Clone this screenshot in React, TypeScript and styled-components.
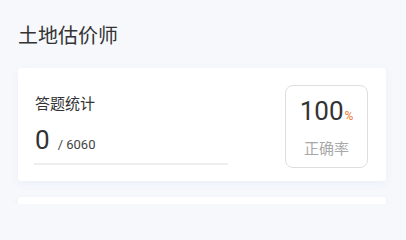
import React from "react";
import styled, { createGlobalStyle } from "styled-components";

const GlobalStyle = createGlobalStyle`
  html, body {
    margin: 0;
    padding: 0;
    background: #f6f8fc;
  }
  body {
    font-family: Roboto, "Noto Sans CJK SC", sans-serif;
    color: #333;
  }
`;

const Page = styled.div`
  display: flex;
  flex-direction: column;
  padding: 21px 20px 0 18px;
  height: 204px;
  box-sizing: border-box;
  overflow: hidden;
`;

const Title = styled.h1`
  margin: 0 0 19px 0;
  font-family: "Noto Sans CJK SC", sans-serif;
  font-size: 20px;
  line-height: 28px;
  font-weight: 400;
  color: #333;
`;

const Card = styled.div`
  display: flex;
  align-items: center;
  justify-content: space-between;
  background: #fff;
  border-radius: 3px;
  box-shadow: 0 3px 10px rgba(40, 80, 160, 0.05);
  padding: 17px 18px 13px 16px;
  margin-bottom: 16px;
  flex-shrink: 0;
`;

const EmptyCard = styled(Card)`
  height: 60px;
`;

const StatColumn = styled.div`
  display: flex;
  flex-direction: column;
  width: 194px;
  padding-top: 4px;
`;

const Label = styled.div`
  font-family: "Noto Sans CJK SC", sans-serif;
  font-size: 15px;
  line-height: 20px;
  color: #333;
  padding-left: 1px;
`;

const CountRow = styled.div`
  display: flex;
  align-items: baseline;
  margin-top: 12px;
  line-height: 30px;
`;

const BigNumber = styled.span`
  font-family: Roboto, sans-serif;
  font-size: 26px;
  color: #333;
  padding-left: 1px;
`;

const Total = styled.span`
  font-family: Roboto, sans-serif;
  font-size: 13px;
  color: #444;
  margin-left: 8px;
`;

const Divider = styled.div`
  height: 2px;
  background: #eeeeee;
  margin-top: 3px;
`;

const RateBox = styled.div`
  width: 83px;
  height: 83px;
  box-sizing: border-box;
  border: 1px solid #dedede;
  border-radius: 8px;
  display: flex;
  flex-direction: column;
  align-items: center;
  justify-content: center;
`;

const RateValue = styled.div`
  display: flex;
  align-items: baseline;
  line-height: 30px;
  font-family: Roboto, sans-serif;
  font-size: 26px;
  color: #333;
`;

const Percent = styled.span`
  font-size: 12px;
  color: #ec7a2c;
  margin-left: 1px;
`;

const RateLabel = styled.div`
  margin-top: 7px;
  font-family: "Noto Sans CJK SC", sans-serif;
  font-size: 15px;
  line-height: 20px;
  color: #a8a8a8;
`;

export default function App() {
  return (
    <>
      <GlobalStyle />
      <Page>
        <Title>土地估价师</Title>
        <Card>
          <StatColumn>
            <Label>答题统计</Label>
            <CountRow>
              <BigNumber>0</BigNumber>
              <Total>/ 6060</Total>
            </CountRow>
            <Divider />
          </StatColumn>
          <RateBox>
            <RateValue>
              100<Percent>%</Percent>
            </RateValue>
            <RateLabel>正确率</RateLabel>
          </RateBox>
        </Card>
        <EmptyCard />
      </Page>
    </>
  );
}
